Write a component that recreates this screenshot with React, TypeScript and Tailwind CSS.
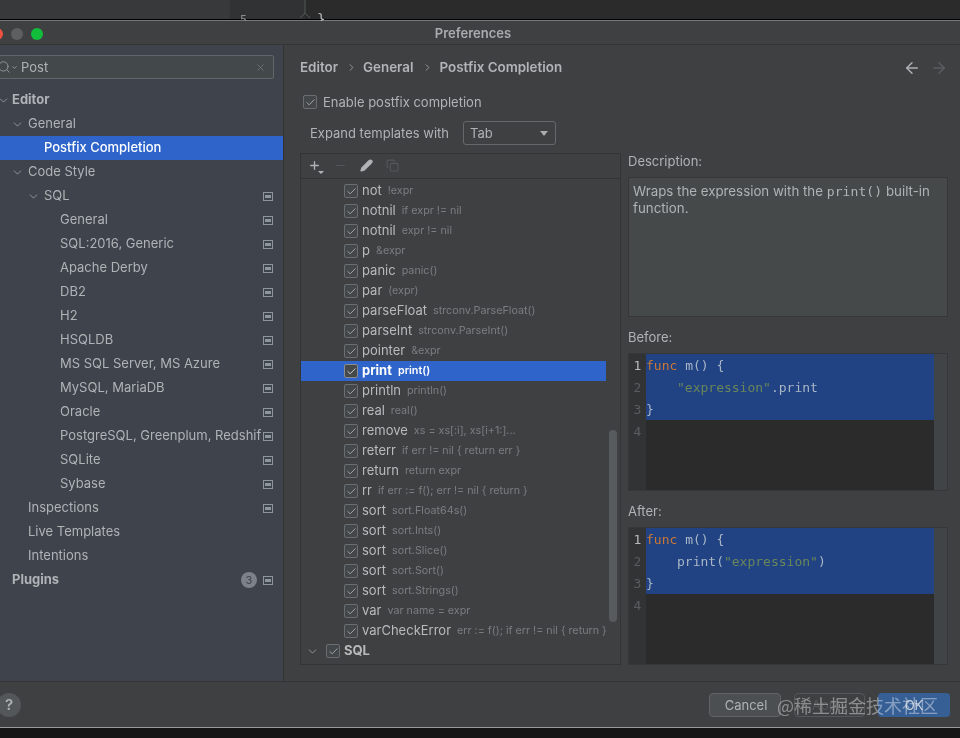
import { ChevronDown, ChevronRight, X, Search, ArrowLeft, ArrowRight, Check, Pencil, Copy, Plus, Minus } from 'lucide-react';
import type { ReactNode } from 'react';

const sidebarRows = [
  { label: 'Editor', pad: 'pl-3', bold: true, chevron: true },
  { label: 'General', pad: 'pl-7', chevron: true },
  { label: 'Postfix Completion', pad: 'pl-11', selected: true },
  { label: 'Code Style', pad: 'pl-7', chevron: true },
  { label: 'SQL', pad: 'pl-11', chevron: true, page: true },
  { label: 'General', pad: 'pl-15', page: true },
  { label: 'SQL:2016, Generic', pad: 'pl-15', page: true },
  { label: 'Apache Derby', pad: 'pl-15', page: true },
  { label: 'DB2', pad: 'pl-15', page: true },
  { label: 'H2', pad: 'pl-15', page: true },
  { label: 'HSQLDB', pad: 'pl-15', page: true },
  { label: 'MS SQL Server, MS Azure', pad: 'pl-15', page: true },
  { label: 'MySQL, MariaDB', pad: 'pl-15', page: true },
  { label: 'Oracle', pad: 'pl-15', page: true },
  { label: 'PostgreSQL, Greenplum, Redshif', pad: 'pl-15', page: true },
  { label: 'SQLite', pad: 'pl-15', page: true },
  { label: 'Sybase', pad: 'pl-15', page: true },
  { label: 'Inspections', pad: 'pl-7', page: true },
  { label: 'Live Templates', pad: 'pl-7' },
  { label: 'Intentions', pad: 'pl-7' },
  { label: 'Plugins', pad: 'pl-3', bold: true, page: true, badge: '3' },
];

const templates = [
  ['not', '!expr'],
  ['notnil', 'if expr != nil'],
  ['notnil', 'expr != nil'],
  ['p', '&expr'],
  ['panic', 'panic()'],
  ['par', '(expr)'],
  ['parseFloat', 'strconv.ParseFloat()'],
  ['parseInt', 'strconv.ParseInt()'],
  ['pointer', '&expr'],
  ['print', 'print()'],
  ['println', 'println()'],
  ['real', 'real()'],
  ['remove', 'xs = xs[:i], xs[i+1:]...'],
  ['reterr', 'if err != nil { return err }'],
  ['return', 'return expr'],
  ['rr', 'if err := f(); err != nil { return }'],
  ['sort', 'sort.Float64s()'],
  ['sort', 'sort.Ints()'],
  ['sort', 'sort.Slice()'],
  ['sort', 'sort.Sort()'],
  ['sort', 'sort.Strings()'],
  ['var', 'var name = expr'],
  ['varCheckError', 'err := f(); if err != nil { return }'],
];

function PageIcon() {
  return (
    <span className="flex h-[9px] w-[10px] items-center justify-center border border-[#8f959c]">
      <span className="h-[3px] w-[6px] bg-[#8f959c]" />
    </span>
  );
}

function Box({ selected }: { selected?: boolean }) {
  return (
    <span
      className={`flex h-[14px] w-[14px] shrink-0 items-center justify-center rounded-[2px] border ${
        selected ? 'border-[#8a8d8f] bg-[#45494a]' : 'border-[#6b6e70] bg-[#43474a]'
      }`}
    >
      <Check size={11} strokeWidth={2} className={selected ? 'text-[#d8dadb]' : 'text-[#a9abad]'} />
    </span>
  );
}

function SidebarRow({ row }: { row: (typeof sidebarRows)[number] }) {
  return (
    <div
      className={`relative flex h-6 items-center pr-[10px] ${row.pad} ${
        row.selected ? 'bg-[#2f65ca] font-medium text-white' : 'text-[#b0b3b6]'
      } ${row.bold ? 'font-bold' : ''}`}
    >
      {row.chevron && (
        <ChevronDown
          size={13}
          strokeWidth={1.5}
          className="absolute text-[#a3a6a9]"
          style={{ left: row.label === 'Editor' ? -3 : row.label === 'SQL' ? 27 : 11 }}
        />
      )}
      <span className="flex-1 truncate">{row.label}</span>
      {row.badge && (
        <span className="mr-[6px] flex h-4 w-4 items-center justify-center rounded-full bg-[#7d8288] text-[11px] font-normal text-[#3e434c]">
          {row.badge}
        </span>
      )}
      {row.page && <PageIcon />}
    </div>
  );
}

function CodePane({ children }: { children: ReactNode[] }) {
  return (
    <div className="flex h-[138px] border border-[#353739] font-['DejaVu_Sans_Mono',monospace] text-[13px] leading-[22px]">
      <div className="flex w-[17px] shrink-0 flex-col bg-[#313335] pt-px text-center text-[#5a5d5f]">
        <span className="text-[#b8babb]">1</span>
        <span>2</span>
        <span>3</span>
        <span>4</span>
      </div>
      <div className="flex flex-1 flex-col bg-[#2b2b2b]">
        <div className="h-[66px] bg-[#214283] pt-px text-[#a9b7c6]">{children}</div>
      </div>
      <div className="w-[13px] shrink-0 bg-[#414446]" />
    </div>
  );
}

function Func() {
  return (
    <div>
      <span className="text-[#cc7832]">func</span> m() {'{'}
    </div>
  );
}

export default function App() {
  return (
    <div className="relative flex h-[738px] w-[960px] flex-col overflow-hidden bg-[#161616] font-['Inter',sans-serif] text-[13px] text-[#b0b3b6] blur-[0.4px]">
      <div className="relative flex h-5 shrink-0 border-b border-black bg-[#38393a]">
        <div className="w-[230px]" />
        <div className="flex w-[75px] items-end bg-[#313233] pl-[10px] font-['DejaVu_Sans_Mono',monospace] text-[12px] leading-[12px] text-[#8a8c8e]">
          <span className="mb-[-7px]">5</span>
        </div>
        <div className="flex flex-1 items-end bg-[#2b2b2b] pl-[12px] font-['DejaVu_Sans_Mono',monospace] text-[14px] leading-[14px] text-[#b8babb]">
          <span className="mb-[-7px]">{'}'}</span>
        </div>
        <svg width="12" height="20" viewBox="0 0 12 20" fill="none" stroke="#55585a" className="absolute left-[299px] top-0">
          <path d="M6 0V13M1 18L6 13L11 18" />
        </svg>
      </div>
      <div className="h-px shrink-0 bg-[#777777]" />

      <div className="relative flex h-6 shrink-0 items-center border-b border-[#333536] bg-[#3e4042] pt-[2px]">
        <div className="ml-[-9px] flex gap-2">
          <span className="h-3 w-3 rounded-full bg-[#f0503f]" />
          <span className="h-3 w-3 rounded-full bg-[#5d5f61]" />
          <span className="h-3 w-3 rounded-full bg-[#12bd3c]" />
        </div>
        <span className="absolute left-0 right-[14px] text-center text-[13px] font-semibold text-[#a9acae]">
          Preferences
        </span>
      </div>

      <div className="flex h-[636px] shrink-0">
        <aside className="flex w-[284px] shrink-0 flex-col border-r border-[#313335] bg-[#3e434c]">
          <div className="mt-[10px] ml-[-10px] mr-[9px] flex h-6 items-center rounded-[2px] border border-[#62666a] bg-[#43484b] pl-[6px] pr-[7px]">
            <Search size={14} strokeWidth={1.5} className="text-[#9a9d9f]" />
            <ChevronDown size={7} strokeWidth={3} className="text-[#9a9d9f]" />
            <span className="ml-[3px] flex-1 pt-px text-[#b0b3b6]">Post</span>
            <X size={11} className="text-[#6f7375]" />
          </div>
          <div className="mt-[9px]">
            {sidebarRows.map((row, i) => (
              <SidebarRow key={i} row={row} />
            ))}
          </div>
        </aside>

        <main className="flex flex-1 flex-col bg-[#3e4042] pl-4 pr-3">
          <div className="flex h-[44px] shrink-0 items-center pt-[1px] text-[13.4px] font-semibold text-[#b2b5b7]">
            <span>Editor</span>
            <ChevronRight size={11} className="ml-[8px] mr-[6px] text-[#9a9d9f]" />
            <span>General</span>
            <ChevronRight size={11} className="ml-[8px] mr-[7px] text-[#9a9d9f]" />
            <span>Postfix Completion</span>
            <ArrowLeft size={18} strokeWidth={2} className="ml-auto text-[#aeb1b3]" />
            <ArrowRight size={18} strokeWidth={2} className="ml-[9px] text-[#5b5e60]" />
          </div>
          <div className="mt-[5px] flex h-[16px] items-center gap-[6px] pl-[3px]">
            <Box />
            <span className="pt-[2px]">Enable postfix completion</span>
          </div>
          <div className="mt-[11px] flex h-6 items-center pl-[10px]">
            <span className="w-[153px] pt-px">Expand templates with</span>
            <div className="flex h-6 w-[93px] items-center justify-between rounded-[3px] border border-[#66696b] pl-[6px] pr-[7px]">
              <span className="pt-px">Tab</span>
              <span className="h-0 w-0 border-x-[4px] border-t-[5px] border-x-transparent border-t-[#a9abad]" />
            </div>
          </div>

          <div className="mt-2 flex min-h-0 gap-[7px]">
            <div className="relative h-[512px] w-[321px] shrink-0 overflow-hidden border border-[#323436]">
              <div className="flex h-[25px] items-center gap-[10px] border-b border-[#323436] pb-px pl-[7px] text-[#b0b3b6]">
                <span className="relative">
                  <Plus size={13} strokeWidth={2.5} />
                  <span className="absolute -bottom-[2px] -right-[3px] h-0 w-0 border-x-[3px] border-t-[3px] border-x-transparent border-t-[#b0b3b6]" />
                </span>
                <Minus size={13} strokeWidth={2} className="ml-[3px] text-[#55585a]" />
                <Pencil size={13} strokeWidth={2.5} className="ml-[3px] fill-[#b0b3b6]" />
                <Copy size={13} strokeWidth={2} className="ml-[3px] text-[#55585a]" />
              </div>
              <div className="pt-[2px]">
                {templates.map(([name, hint], i) => {
                  const selected = name === 'print';
                  return (
                    <div
                      key={i}
                      className={`flex h-5 items-center pl-[43px] ${
                        selected ? 'mr-[14px] bg-[#2f65ca] text-white' : ''
                      }`}
                    >
                      <Box selected={selected} />
                      <span className={`ml-[4px] ${selected ? 'font-bold' : 'text-[#b8babc]'}`}>{name}</span>
                      <span className={`ml-[6px] whitespace-nowrap text-[10.75px] ${selected ? 'font-semibold text-white' : 'text-[#7b7e80]'}`}>
                        {hint}
                      </span>
                    </div>
                  );
                })}
                <div className="flex h-5 items-center pl-[5px]">
                  <ChevronDown size={13} strokeWidth={1.5} className="text-[#a3a6a9]" />
                  <span className="ml-[7px]">
                    <Box />
                  </span>
                  <span className="ml-[4px] font-bold text-[#b8babc]">SQL</span>
                </div>
                <div className="flex h-5 items-center pl-[43px]">
                  <Box />
                </div>
              </div>
              <div className="absolute bottom-[42px] right-[3px] h-[192px] w-2 rounded-full bg-[#585b5d]" />
            </div>

            <div className="flex w-[320px] shrink-0 flex-col">
              <span className="h-[24px] leading-[17px]">Description:</span>
              <div className="h-[140px] border border-[#353739] bg-[#45494a] px-[4px] pt-[5px] text-[13.3px] leading-[17px] text-[#b0b3b6]">
                Wraps the expression with the <span className="font-['DejaVu_Sans_Mono',monospace] text-[13px] tracking-[0.1px]">print()</span> built-in function.
              </div>
              <span className="mt-[12px] h-[24px] leading-[16px]">Before:</span>
              <CodePane>
                {[
                  <Func key="1" />,
                  <div key="2" className="pl-[31px]">
                    <span className="text-[#6a8759]">"expression"</span>.print
                  </div>,
                  <div key="3">{'}'}</div>,
                ]}
              </CodePane>
              <span className="mt-[12px] h-[24px] leading-[16px]">After:</span>
              <CodePane>
                {[
                  <Func key="1" />,
                  <div key="2" className="pl-[31px]">
                    print(<span className="text-[#6a8759]">"expression"</span>)
                  </div>,
                  <div key="3">{'}'}</div>,
                ]}
              </CodePane>
            </div>
          </div>
        </main>
      </div>

      <footer className="flex h-[46px] shrink-0 items-center border-t border-[#323436] bg-[#3e4042] pt-[1px]">
        <span className="ml-[-3px] flex h-6 w-6 items-center justify-center rounded-full bg-[#54575a] text-[15px] font-semibold text-[#b0b3b6]">
          ?
        </span>
        <div className="ml-auto mr-[10px] flex gap-[13px]">
          <span className="flex h-6 w-[72px] items-center justify-center rounded-[4px] border border-[#5f6365] bg-[#4b4f51] pt-px pl-[2px]">
            Cancel
          </span>
          <span className="flex h-6 w-[71px] items-center justify-center rounded-[4px] border border-[#55585a] pt-px text-[#55585a]">
            Apply
          </span>
          <span className="flex h-6 w-[72px] items-center justify-center rounded-[4px] bg-[#365f96] pt-px text-[#c5cfdc]">
            OK
          </span>
        </div>
      </footer>
      <div className="h-px shrink-0 bg-[#9a9a9a]" />

      <span className="absolute left-[777px] top-[694px] font-['Noto_Sans_CJK_SC',sans-serif] text-[18px] leading-[22px] text-white/40">
        @稀土掘金技术社区
      </span>
    </div>
  );
}
